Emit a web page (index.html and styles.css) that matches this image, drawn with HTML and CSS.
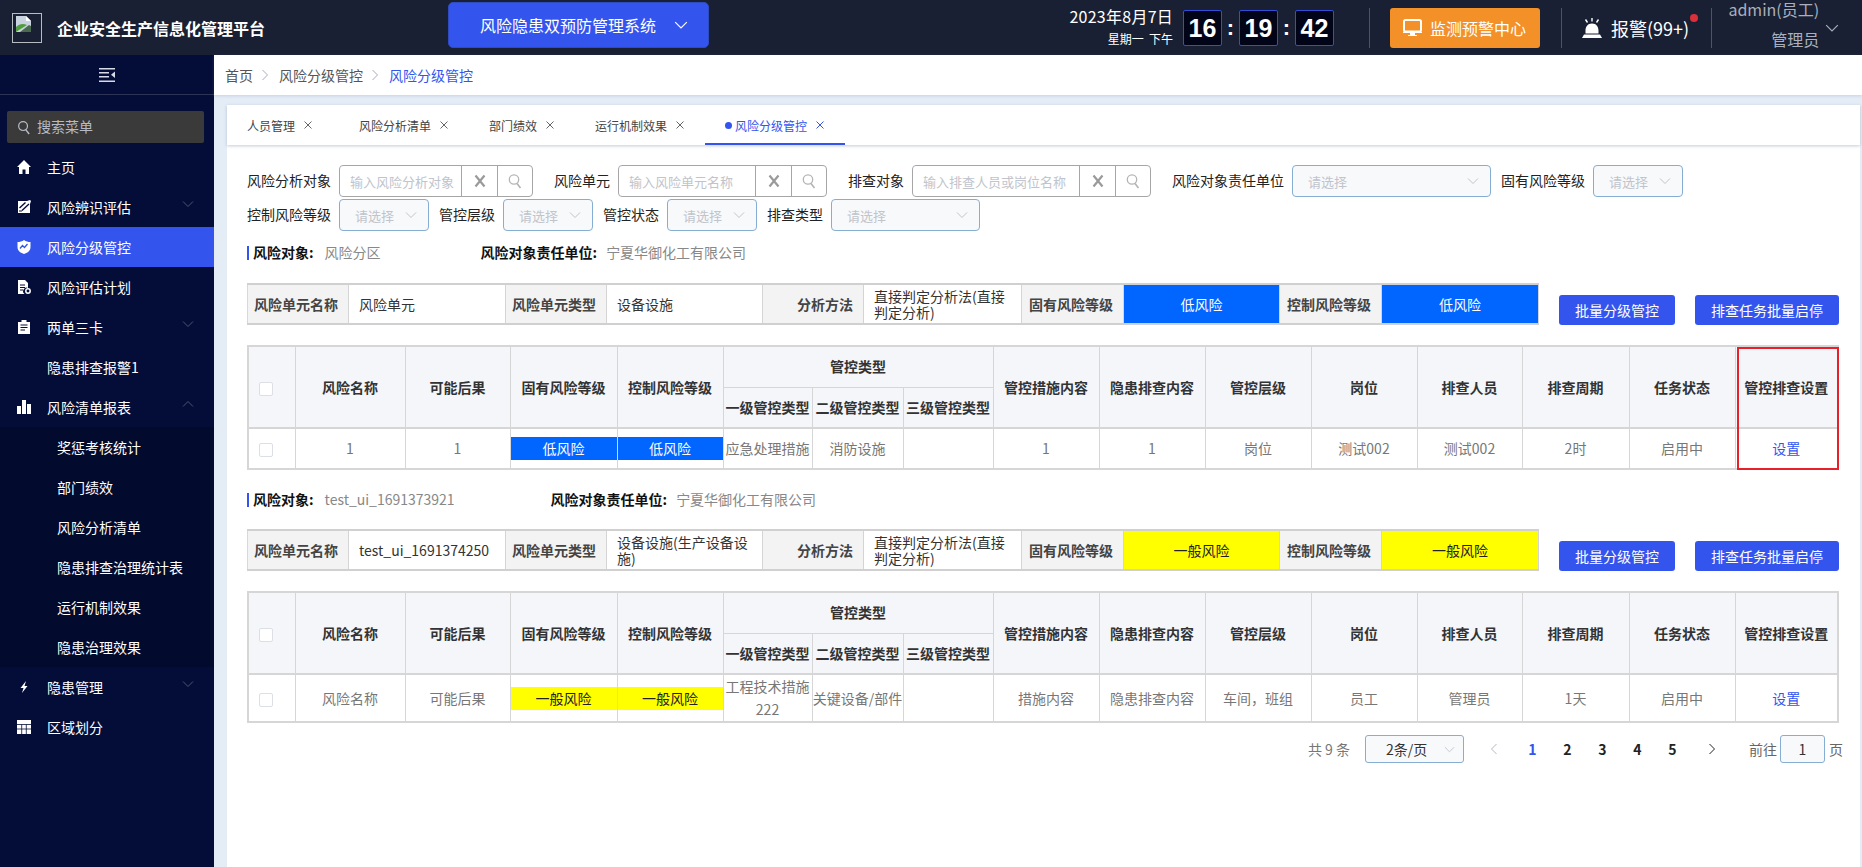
FILE: index.html
```html
<!DOCTYPE html>
<html lang="zh-CN">
<head>
  <meta charset="UTF-8">
  <title>企业安全生产信息化管理平台</title>
  <link rel="stylesheet" href="styles.css">
</head>
<body>
  <svg class="defs" width="0" height="0">
    <symbol id="chev" viewBox="0 0 12 12"><path d="M1 3.5 6 8.5 11 3.5" fill="none" stroke="currentColor" stroke-width="1"/></symbol>
    <symbol id="close" viewBox="0 0 10 10"><path d="M1.5 1.5 8.5 8.5M8.5 1.5 1.5 8.5" fill="none" stroke="currentColor" stroke-width="1"/></symbol>
    <symbol id="cross" viewBox="0 0 14 14"><path d="M2.5 1.5 11.5 12.5M11.5 1.5 2.5 12.5" fill="none" stroke="currentColor" stroke-width="2.2"/></symbol>
    <symbol id="lens" viewBox="0 0 14 16"><circle cx="6" cy="6.5" r="4.7" fill="none" stroke="currentColor" stroke-width="1.3"/><path d="M9 10.5 12.5 15" fill="none" stroke="currentColor" stroke-width="1.6"/></symbol>
  </svg>

  <header class="topbar">
    <div class="logo-box">
      <svg width="17" height="17" viewBox="0 0 17 17">
        <path d="M1 0H11L16 5V16H1Z" fill="#c9d3df"/>
        <path d="M11 0V5H16Z" fill="#fff"/>
        <path d="M1 16V11C4 8 8 7 12 9L1 16Z" fill="#4f9e3c"/>
        <path d="M5 16 14 9 16 10V16Z" fill="#4a6a50"/>
      </svg>
    </div>
    <div class="app-title">企业安全生产信息化管理平台</div>
    <div class="system-btn">风险隐患双预防管理系统
      <svg class="system-chev" width="14" height="14"><use href="#chev"/></svg>
    </div>
    <div class="date-box">
      <div class="date-main">2023年8月7日</div>
      <div class="date-sub">星期一&nbsp;&nbsp;下午</div>
    </div>
    <div class="digit">16</div>
    <div class="colon">:</div>
    <div class="digit">19</div>
    <div class="colon">:</div>
    <div class="digit">42</div>
    <div class="top-sep sep-a"></div>
    <div class="monitor-btn">
      <svg width="19" height="17" viewBox="0 0 19 17">
        <rect x="1" y="1" width="17" height="11.5" rx="1.5" fill="none" stroke="#fff" stroke-width="2"/>
        <path d="M0 13H19V14H12V16H14V17H5V16H7V14H0Z" fill="#fff"/>
      </svg>
      监测预警中心
    </div>
    <div class="top-sep sep-b"></div>
    <div class="alarm">
      <svg width="20" height="20" viewBox="0 0 20 20">
        <path d="M10 5.500C5.500 5.500 3.500 9 3.500 12.500V15.500H16.500V12.500C16.500 9 14.500 5.500 10 5.500ZM2 16.500H18L20 20H0Z" fill="#fff"/>
        <path d="M10 0V3.500M3.500 1.500 5.500 4.500M16.500 1.500 14.500 4.500" stroke="#fff" stroke-width="1.400"/>
      </svg>
      <span class="alarm-text">报警(99+)</span>
      <span class="alarm-dot"></span>
    </div>
    <div class="top-sep sep-c"></div>
    <div class="user">
      <div>admin(员工)</div>
      <div>管理员</div>
    </div>
    <svg class="user-chev" width="14" height="14"><use href="#chev"/></svg>
  </header>

  <div class="main">
    <aside class="sidebar">
      <div class="collapse-row">
        <svg width="16" height="14" viewBox="0 0 16 14">
          <path d="M0 0H16V1.500H0ZM0 4H10V5.500H0ZM0 8H10V9.500H0ZM0 12.500H16V14H0Z" fill="#d8dbe6"/>
          <path d="M16 3.500V10L12 6.800Z" fill="#d8dbe6"/>
        </svg>
      </div>
      <div class="menu-search">
        <svg width="14" height="15" viewBox="0 0 14 16"><use href="#lens"/></svg>
        <span>搜索菜单</span>
      </div>
      <nav class="menu">
        <div class="menu-item">
          <svg class="menu-icon" width="14" height="14" viewBox="0 0 14 14"><path d="M7 0 14 7H12V14H8.500V9.500H5.500V14H2V7H0Z" fill="#fff"/></svg>
          主页
        </div>
        <div class="menu-item">
          <svg class="menu-icon" width="14" height="14" viewBox="0 0 14 14">
            <path d="M1 1H10L13 0 14 1 13 4V13H1Z" fill="#fff"/>
            <path d="M2.500 8 8.500 2.500M5 10.500 12 4" stroke="#040d38" stroke-width="1.400"/>
            <path d="M2 11H5" stroke="#040d38" stroke-width="1"/>
          </svg>
          风险辨识评估
          <svg class="menu-chev" width="12" height="12"><use href="#chev"/></svg>
        </div>
        <div class="menu-item active">
          <svg class="menu-icon" width="14" height="14" viewBox="0 0 14 14">
            <path d="M7 0C9 1.500 11 2 13.500 2V7C13.500 11 10 13 7 14C4 13 .5 11 .5 7V2C3 2 5 1.500 7 0Z" fill="#fff"/>
            <path d="M3 8.500 5.500 5.500 7.500 7.500 10.500 4" fill="none" stroke="#3355ee" stroke-width="1.300"/>
          </svg>
          风险分级管控
        </div>
        <div class="menu-item">
          <svg class="menu-icon" width="14" height="14" viewBox="0 0 14 14">
            <path d="M1 0H8L11 3V8A3.500 3.500 0 0 0 7.500 14H1Z" fill="#fff"/>
            <path d="M3 5H8M3 7.500H8M3 10H6" stroke="#040d38" stroke-width="1"/>
            <circle cx="11" cy="11" r="2.200" fill="none" stroke="#fff" stroke-width="1.500"/>
          </svg>
          风险评估计划
        </div>
        <div class="menu-item">
          <svg class="menu-icon" width="14" height="14" viewBox="0 0 14 14">
            <path d="M1 2H4.500V0H9.500V2H13V14H1Z" fill="#fff"/>
            <path d="M3.500 5H10.500M3.500 7.500H10.500M3.500 10H8" stroke="#040d38" stroke-width="1"/>
          </svg>
          两单三卡
          <svg class="menu-chev" width="12" height="12"><use href="#chev"/></svg>
        </div>
        <div class="menu-item no-icon">隐患排查报警1</div>
        <div class="menu-item">
          <svg class="menu-icon" width="14" height="14" viewBox="0 0 14 14"><path d="M0 6H4V14H0ZM5 0H9V14H5ZM10 4H14V14H10Z" fill="#fff"/></svg>
          风险清单报表
          <svg class="menu-chev up" width="12" height="12"><use href="#chev"/></svg>
        </div>
        <div class="submenu">
          <div class="menu-item sub">奖惩考核统计</div>
          <div class="menu-item sub">部门绩效</div>
          <div class="menu-item sub">风险分析清单</div>
          <div class="menu-item sub">隐患排查治理统计表</div>
          <div class="menu-item sub">运行机制效果</div>
          <div class="menu-item sub">隐患治理效果</div>
        </div>
        <div class="menu-item">
          <svg class="menu-icon" width="14" height="14" viewBox="0 0 14 14"><path d="M9 1 3.500 8H6.500L5 13 10.500 6H7.500Z" fill="#fff"/></svg>
          隐患管理
          <svg class="menu-chev" width="12" height="12"><use href="#chev"/></svg>
        </div>
        <div class="menu-item">
          <svg class="menu-icon" width="14" height="14" viewBox="0 0 14 14">
            <path d="M0 0H14V14H0Z" fill="#fff"/>
            <path d="M0 4.500H14M0 9H14M4.700 4.500V14M9.300 4.500V14" stroke="#040d38" stroke-width="0.800"/>
          </svg>
          区域划分
        </div>
      </nav>
    </aside>

    <div class="content">
      <div class="breadcrumb">
        <span>首页</span>
        <svg class="crumb-sep" width="12" height="12"><use href="#chev"/></svg>
        <span>风险分级管控</span>
        <svg class="crumb-sep" width="12" height="12"><use href="#chev"/></svg>
        <span class="crumb-now">风险分级管控</span>
      </div>

      <div class="card">
        <div class="tabs">
          <div class="tab first">人员管理<svg class="tab-x" width="10" height="10"><use href="#close"/></svg></div>
          <div class="tab">风险分析清单<svg class="tab-x" width="10" height="10"><use href="#close"/></svg></div>
          <div class="tab">部门绩效<svg class="tab-x" width="10" height="10"><use href="#close"/></svg></div>
          <div class="tab">运行机制效果<svg class="tab-x" width="10" height="10"><use href="#close"/></svg></div>
          <div class="tab active"><span class="tab-dot"></span>风险分级管控<svg class="tab-x" width="10" height="10"><use href="#close"/></svg></div>
        </div>

        <div class="card-body">
          <div class="filter-row first-row">
            <label class="field-label">风险分析对象</label>
            <div class="search-group w194">
              <input class="search-input" placeholder="输入风险分析对象">
              <span class="search-btn clear"><svg width="14" height="14"><use href="#cross"/></svg></span>
              <span class="search-btn"><svg width="14" height="16"><use href="#lens"/></svg></span>
            </div>
            <label class="field-label">风险单元</label>
            <div class="search-group w209">
              <input class="search-input" placeholder="输入风险单元名称">
              <span class="search-btn clear"><svg width="14" height="14"><use href="#cross"/></svg></span>
              <span class="search-btn"><svg width="14" height="16"><use href="#lens"/></svg></span>
            </div>
            <label class="field-label">排查对象</label>
            <div class="search-group w239">
              <input class="search-input" placeholder="输入排查人员或岗位名称">
              <span class="search-btn clear"><svg width="14" height="14"><use href="#cross"/></svg></span>
              <span class="search-btn"><svg width="14" height="16"><use href="#lens"/></svg></span>
            </div>
            <label class="field-label">风险对象责任单位</label>
            <div class="fake-select w199">请选择<svg width="12" height="12"><use href="#chev"/></svg></div>
            <label class="field-label">固有风险等级</label>
            <div class="fake-select w90">请选择<svg width="12" height="12"><use href="#chev"/></svg></div>
          </div>
          <div class="filter-row">
            <label class="field-label">控制风险等级</label>
            <div class="fake-select w90">请选择<svg width="12" height="12"><use href="#chev"/></svg></div>
            <label class="field-label">管控层级</label>
            <div class="fake-select w90">请选择<svg width="12" height="12"><use href="#chev"/></svg></div>
            <label class="field-label">管控状态</label>
            <div class="fake-select w90">请选择<svg width="12" height="12"><use href="#chev"/></svg></div>
            <label class="field-label">排查类型</label>
            <div class="fake-select w150">请选择<svg width="12" height="12"><use href="#chev"/></svg></div>
          </div>

          <!-- 第一组 -->
          <div class="object-line">
            <b>风险对象:</b><span class="object-value">风险分区</span>
            <b class="object-owner">风险对象责任单位:</b><span class="object-value">宁夏华御化工有限公司</span>
          </div>
          <div class="info-row">
            <table class="info-table">
              <colgroup><col width="101"><col width="157"><col width="101"><col width="156"><col width="101"><col width="158"><col width="102"><col width="156"><col width="102"><col width="157"></colgroup>
              <tr>
                <th>风险单元名称</th><td>风险单元</td>
                <th>风险单元类型</th><td>设备设施</td>
                <th>分析方法</th><td>直接判定分析法(直接判定分析)</td>
                <th>固有风险等级</th><td class="lvl lvl-low">低风险</td>
                <th>控制风险等级</th><td class="lvl lvl-low">低风险</td>
              </tr>
            </table>
            <button class="act-btn first-btn">批量分级管控</button>
            <button class="act-btn">排查任务批量启停</button>
          </div>
          <div class="table-wrap">
            <table class="data-table">
              <colgroup><col width="47"><col width="110"><col width="105"><col width="107"><col width="106"><col width="89"><col width="91"><col width="90"><col width="106"><col width="106"><col width="106"><col width="106"><col width="105"><col width="107"><col width="106"><col width="103"></colgroup>
              <tr>
                <th rowspan="2" class="check-cell"><span class="check"></span></th>
                <th rowspan="2">风险名称</th><th rowspan="2">可能后果</th><th rowspan="2">固有风险等级</th><th rowspan="2">控制风险等级</th>
                <th colspan="3">管控类型</th>
                <th rowspan="2">管控措施内容</th><th rowspan="2">隐患排查内容</th><th rowspan="2">管控层级</th><th rowspan="2">岗位</th><th rowspan="2">排查人员</th><th rowspan="2">排查周期</th><th rowspan="2">任务状态</th><th rowspan="2">管控排查设置</th>
              </tr>
              <tr><th>一级管控类型</th><th>二级管控类型</th><th>三级管控类型</th></tr>
              <tr class="body-row">
                <td class="check-cell"><span class="check"></span></td>
                <td>1</td><td>1</td>
                <td><div class="pill pill-low">低风险</div></td>
                <td><div class="pill pill-low">低风险</div></td>
                <td>应急处理措施</td><td>消防设施</td><td></td>
                <td>1</td><td>1</td><td>岗位</td><td>测试002</td><td>测试002</td><td>2时</td><td>启用中</td>
                <td><a class="link">设置</a></td>
              </tr>
            </table>
            <div class="highlight"></div>
          </div>

          <!-- 第二组 -->
          <div class="object-line second">
            <b>风险对象:</b><span class="object-value">test_ui_1691373921</span>
            <b class="object-owner">风险对象责任单位:</b><span class="object-value">宁夏华御化工有限公司</span>
          </div>
          <div class="info-row">
            <table class="info-table">
              <colgroup><col width="101"><col width="157"><col width="101"><col width="156"><col width="101"><col width="158"><col width="102"><col width="156"><col width="102"><col width="157"></colgroup>
              <tr>
                <th>风险单元名称</th><td>test_ui_1691374250</td>
                <th>风险单元类型</th><td>设备设施(生产设备设施)</td>
                <th>分析方法</th><td>直接判定分析法(直接判定分析)</td>
                <th>固有风险等级</th><td class="lvl lvl-mid">一般风险</td>
                <th>控制风险等级</th><td class="lvl lvl-mid">一般风险</td>
              </tr>
            </table>
            <button class="act-btn first-btn">批量分级管控</button>
            <button class="act-btn">排查任务批量启停</button>
          </div>
          <div class="table-wrap">
            <table class="data-table">
              <colgroup><col width="47"><col width="110"><col width="105"><col width="107"><col width="106"><col width="89"><col width="91"><col width="90"><col width="106"><col width="106"><col width="106"><col width="106"><col width="105"><col width="107"><col width="106"><col width="103"></colgroup>
              <tr>
                <th rowspan="2" class="check-cell"><span class="check"></span></th>
                <th rowspan="2">风险名称</th><th rowspan="2">可能后果</th><th rowspan="2">固有风险等级</th><th rowspan="2">控制风险等级</th>
                <th colspan="3">管控类型</th>
                <th rowspan="2">管控措施内容</th><th rowspan="2">隐患排查内容</th><th rowspan="2">管控层级</th><th rowspan="2">岗位</th><th rowspan="2">排查人员</th><th rowspan="2">排查周期</th><th rowspan="2">任务状态</th><th rowspan="2">管控排查设置</th>
              </tr>
              <tr><th>一级管控类型</th><th>二级管控类型</th><th>三级管控类型</th></tr>
              <tr class="body-row tall">
                <td class="check-cell"><span class="check"></span></td>
                <td>风险名称</td><td>可能后果</td>
                <td><div class="pill pill-mid">一般风险</div></td>
                <td><div class="pill pill-mid">一般风险</div></td>
                <td>工程技术措施222</td><td class="no-wrap">关键设备/部件</td><td></td>
                <td>措施内容</td><td>隐患排查内容</td><td>车间，班组</td><td>员工</td><td>管理员</td><td>1天</td><td>启用中</td>
                <td><a class="link">设置</a></td>
              </tr>
            </table>
          </div>

          <div class="pager">
            <span class="pager-total">共 9 条</span>
            <div class="pager-size">2条/页<svg width="11" height="11"><use href="#chev"/></svg></div>
            <span class="pager-btn prev"><svg width="12" height="12"><use href="#chev"/></svg></span>
            <span class="pager-btn current">1</span>
            <span class="pager-btn">2</span>
            <span class="pager-btn">3</span>
            <span class="pager-btn">4</span>
            <span class="pager-btn">5</span>
            <span class="pager-btn next"><svg width="12" height="12"><use href="#chev"/></svg></span>
            <span class="pager-go">前往</span>
            <div class="pager-input">1</div>
            <span class="pager-page">页</span>
          </div>
        </div>
      </div>
    </div>
  </div>
</body>
</html>
```

FILE: styles.css
```css
* { box-sizing: border-box; }
html, body { margin: 0; padding: 0; }
body {
  width: 1862px;
  height: 867px;
  overflow: hidden;
  font-family: "Noto Sans CJK SC", "Liberation Sans", sans-serif;
  font-size: 14px;
  color: #333;
  background: #e4ecf6;
}
.defs { position: absolute; }

/* 顶部栏 */
.topbar {
  height: 55px;
  display: flex;
  align-items: center;
  background: #1a2034;
  color: #fff;
}
.logo-box {
  width: 30px;
  height: 30px;
  margin-left: 12px;
  padding: 2px;
  border: 1px solid #b8bbc2;
}
.logo-box svg { display: block; }
.app-title { margin-left: 15px; font-size: 16px; font-weight: 700; white-space: nowrap; }
.system-btn {
  display: flex;
  align-items: center;
  align-self: flex-start;
  width: 261px;
  height: 46px;
  margin: 2px 0 0 183px;
  padding-left: 31px;
  font-size: 16px;
  background: #3355ee;
  border: 1px solid #2f4bc0;
  border-radius: 5px;
}
.system-chev { margin-left: 18px; }
.date-box { width: 104px; margin-left: 360px; text-align: right; }
.date-main { display: flex; justify-content: flex-end; font-size: 16px; letter-spacing: 0.25px; line-height: 24px; white-space: nowrap; margin-top: -1px; }
.date-sub { font-size: 12px; line-height: 22px; white-space: nowrap; }
.digit {
  width: 39px;
  height: 36px;
  font-family: "Liberation Sans", sans-serif;
  font-size: 25px;
  font-weight: 700;
  line-height: 35px;
  text-align: center;
  background: #020418;
  border: 1px solid #2f4fd8;
  border-radius: 2px;
}
.date-box + .digit { margin-left: 10px; }
.colon {
  width: 17px;
  font-family: "Liberation Sans", sans-serif;
  font-size: 22px;
  font-weight: 700;
  line-height: 30px;
  text-align: center;
}
.top-sep { width: 1px; height: 40px; background: #4c5468; }
.sep-a { margin-left: 35px; }
.sep-b { margin-left: 21px; }
.sep-c { margin-left: 22px; }
.monitor-btn {
  display: flex;
  align-items: center;
  gap: 8px;
  width: 150px;
  height: 40px;
  margin-left: 20px;
  padding-left: 13px;
  font-size: 16px;
  white-space: nowrap;
  background: #f39027;
  border-radius: 3px;
}
.alarm { display: flex; align-items: center; position: relative; margin-left: 20px; font-size: 18px; }
.alarm-text { margin-left: 9px; white-space: nowrap; }
.alarm-dot {
  position: absolute;
  top: -1px;
  right: -9px;
  width: 8px;
  height: 8px;
  background: #d9303a;
  border-radius: 50%;
}
.user { width: 107px; text-align: right; color: #a9afbc; font-size: 16px; line-height: 30px; margin-top: -7px; }
.user-chev { margin-left: 6px; color: #a9afbc; }

.main { display: flex; height: 812px; }

/* 左侧菜单 */
.sidebar { width: 214px; background: #040d38; color: #fff; flex-shrink: 0; }
.collapse-row {
  height: 40px;
  display: flex;
  align-items: center;
  justify-content: center;
  border-bottom: 1px solid #2c3354;
}
.menu-search {
  display: flex;
  align-items: center;
  gap: 6px;
  height: 32px;
  margin: 16px 10px 0 7px;
  padding-left: 10px;
  color: #b6bac6;
  background: #3a3a3a;
  border-radius: 2px;
}
.menu-search span { padding-bottom: 2px; }
.menu { margin-top: 4px; }
.menu-item {
  display: flex;
  align-items: center;
  height: 40px;
  padding-left: 17px;
  white-space: nowrap;
}
.menu-item.active { background: #3355ee; }
.menu-item.no-icon { padding-left: 47px; }
.menu-icon { margin-right: 16px; flex-shrink: 0; }
.menu-chev { margin-left: auto; margin-right: 20px; margin-top: -6px; color: #4c5472; }
.menu-chev.up { transform: rotate(180deg); }
.submenu { background: #020a2e; }
.menu-item.sub { padding-left: 57px; }

/* 内容区 */
.content { flex: 1; min-width: 0; }
.breadcrumb {
  display: flex;
  align-items: center;
  height: 40px;
  padding-left: 11px;
  background: #fff;
  color: #555;
  box-shadow: 0 1px 3px rgba(120, 140, 170, 0.25);
}
.crumb-sep { margin: 0 8px 0 6px; color: #aab; transform: rotate(-90deg); }
.crumb-now { color: #3355ee; }

.card { margin: 10px 2px 0 13px; height: 762px; background: #fff; }
.tabs {
  display: flex;
  height: 40px;
  box-shadow: 0 1px 3px rgba(120, 140, 170, 0.45);
}
.tab {
  display: flex;
  align-items: center;
  padding: 0 20px;
  font-size: 12px;
  color: #444;
  white-space: nowrap;
}
.tab.first { margin-right: 6px; }
.tab-x { margin-left: 8px; color: #666; }
.tab.active { color: #3355ee; border-bottom: 2px solid #3355ee; padding-top: 2px; }
.tab.active .tab-x { color: #3355ee; }
.tab-dot { width: 7px; height: 7px; margin-right: 3px; background: #3355ee; border-radius: 50%; }

.card-body { padding: 20px 0 0 20px; }
.filter-row { display: flex; align-items: center; height: 32px; margin-top: 2px; }
.first-row { margin-top: 0; }
.field-label { margin-right: 8px; padding-bottom: 2px; color: #222; white-space: nowrap; }
.search-group {
  display: flex;
  height: 32px;
  margin-right: 21px;
  border: 1px solid #a6a6a6;
  border-radius: 4px;
  overflow: hidden;
}
.w194 { width: 194px; }
.w209 { width: 209px; }
.w239 { width: 239px; }
.w90 { width: 90px; }
.w150 { width: 149px; }
.w199 { width: 199px; }
.search-input {
  flex: 1;
  min-width: 0;
  padding: 0 5px 0 10px;
  font-family: inherit;
  font-size: 13px;
  border: 1px solid #85aed2;
  border-radius: 4px 0 0 4px;
  margin: -1px 0 -1px -1px;
  outline: none;
}
.search-input::placeholder { color: #c0c4cc; }
.search-btn {
  display: flex;
  align-items: center;
  justify-content: center;
  width: 35px;
  color: #b4b4b4;
  border-left: 1px solid #85aed2;
}
.search-btn.clear { width: 35px; border-left: 0; color: #9a9a9a; }
.fake-select {
  display: flex;
  align-items: center;
  justify-content: space-between;
  height: 32px;
  margin-right: 10px;
  padding: 0 11px 0 15px;
  font-size: 13px;
  color: #c0c4cc;
  background: #f8f9fb;
  border: 1px solid #85aed2;
  border-radius: 4px;
}

.object-line { display: flex; align-items: center; height: 14px; margin-top: 15px; padding-left: 4px; border-left: 2px solid #3355ee; color: #111; }
.object-line > * { margin-bottom: 2px; }
.object-line.second { margin-top: 23px; }
.object-value { margin-left: 11px; color: #888; width: 156px; white-space: nowrap; }
.second .object-value:nth-of-type(1) { width: 226px; }
.object-line b { white-space: nowrap; }
.object-owner + .object-value { margin-left: 9px; }

.info-row { display: flex; align-items: flex-end; margin-top: 23px; }
.second + .info-row { margin-top: 22px; }
.info-table {
  width: 1291px;
  flex-shrink: 0;
  table-layout: fixed;
  border-collapse: collapse;
  border-top: 2px solid #d0d0d0;
  border-bottom: 2px solid #d0d0d0;
  border-left: 1px solid #d8d8d8;
}
.info-table th, .info-table td { height: 40px; border-right: 1px solid #d4d4d4; line-height: 16px; }
.info-table th { padding: 0 10px 0 0; text-align: right; font-weight: 700; color: #444; background: #f3f3f3; white-space: nowrap; }
.info-table td { padding: 0 10px; color: #333; background: #fff; }
.info-table td.lvl { text-align: center; padding: 0; }
.info-table td.lvl-low { background: #0066ff; color: #fff; }
.info-table td.lvl-mid { background: #ffff00; color: #222; }
.act-btn {
  flex-shrink: 0;
  height: 30px;
  margin-left: 20px;
  padding: 0;
  font-family: inherit;
  font-size: 14px;
  color: #fff;
  background: #3355ee;
  border: 0;
  border-radius: 3px;
}
.first-btn { width: 116px; }
.act-btn:not(.first-btn) { width: 144px; }

.table-wrap { position: relative; width: 1590px; margin-top: 20px; }
.data-table {
  width: 1590px;
  table-layout: fixed;
  border-collapse: collapse;
  border: 2px solid #d6d6d6;
}
.data-table th, .data-table td { padding: 0; text-align: center; border: 1px solid #d6d6d6; line-height: 23px; }
.data-table th { height: 41px; font-weight: 700; color: #333; background: #f4f6fa; white-space: nowrap; }
.data-table th[rowspan] { border-bottom: 2px solid #d6d6d6; }
.data-table tr:nth-child(2) th { border-bottom: 2px solid #d6d6d6; }
.data-table td { height: 41px; color: #777; }
.data-table .check-cell { text-align: left; padding-left: 10px; }
.data-table .no-wrap { white-space: nowrap; }
.body-row.tall td { height: 48px; }
.pill { height: 23px; line-height: 23px; }
.pill-low { background: #0066ff; color: #fff; }
.pill-mid { background: #ffff00; color: #222; }
.check {
  display: inline-block;
  width: 14px;
  height: 14px;
  vertical-align: middle;
  background: #fff;
  border: 1px solid #dcdfe6;
  border-radius: 2px;
}
.link { color: #3355ee; }
.highlight {
  position: absolute;
  top: 2px;
  right: -2px;
  bottom: 0;
  width: 102px;
  border: 2px solid #e8202a;
}

/* 分页 */
.pager { display: flex; align-items: center; justify-content: flex-end; height: 28px; margin: 12px 17px 0 0; font-size: 14px; color: #333; }
.pager-total { color: #777; white-space: nowrap; }
.pager-size {
  display: flex;
  align-items: center;
  justify-content: space-between;
  width: 99px;
  height: 28px;
  margin-left: 15px;
  padding: 0 8px 0 20px;
  white-space: nowrap;
  background: #f8f9fb;
  border: 1px solid #85aed2;
  border-radius: 3px;
}
.pager-size svg { color: #c0c4cc; }
.pager-btn { display: flex; align-items: center; justify-content: center; width: 35px; font-weight: 700; color: #222; }
.pager-btn.current { color: #3355ee; }
.pager-btn.prev { margin: 0 4px 0 12px; color: #b4b8c2; }
.pager-btn.prev svg { transform: rotate(90deg); }
.pager-btn.next { margin-left: 4px; }
.pager-btn.next svg { transform: rotate(-90deg); }
.pager-go { margin: 0 3px 0 20px; color: #666; white-space: nowrap; }
.pager-input {
  width: 45px;
  height: 28px;
  line-height: 26px;
  text-align: center;
  background: #f8f9fb;
  border: 1px solid #85aed2;
  border-radius: 3px;
}
.pager-page { margin-left: 4px; color: #666; }
```
